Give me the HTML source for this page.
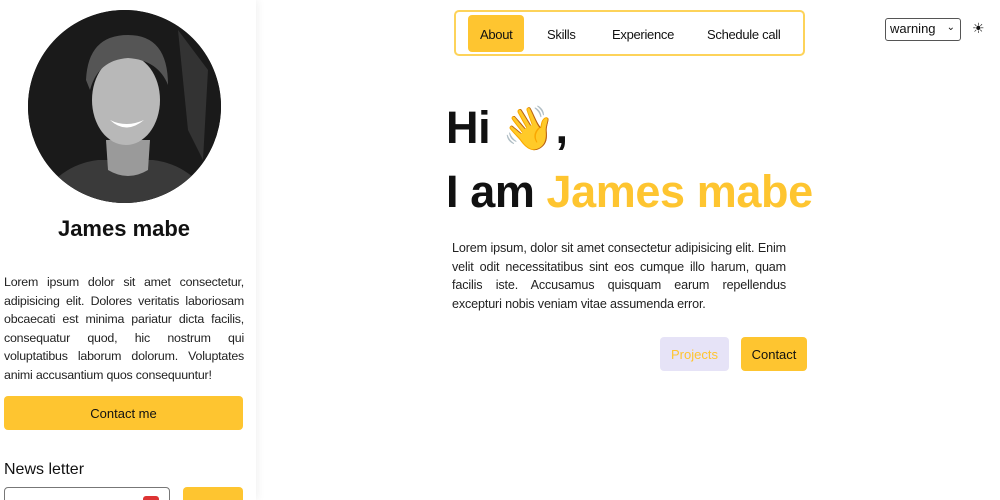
<!DOCTYPE html>
<html><head><style>
*{margin:0;padding:0;box-sizing:border-box}
html,body{width:1000px;height:500px;overflow:hidden}
body{background:#fff;font-family:"Liberation Sans",sans-serif;color:#111;position:relative}
.side{position:absolute;left:0;top:0;width:256px;height:500px;background:#fff;box-shadow:2px 0 8px rgba(0,0,0,.06);overflow:hidden}
.photo{position:absolute;left:28px;top:10px;width:193px;height:193px;border-radius:50%;background:#111;overflow:hidden}
.name{position:absolute;left:0;width:248px;top:216px;text-align:center;font-size:22px;font-weight:bold}
.bio{position:absolute;left:4px;top:273px;width:240px;font-size:12.4px;letter-spacing:-0.2px;line-height:18.5px;text-align:justify;color:#222}
.btn{position:absolute;background:#fec530;border-radius:4px;font-size:13px;display:flex;align-items:center;justify-content:center}
.nav{position:absolute;left:454px;top:10px;width:351px;height:46px;border:2px solid #fdd35a;border-radius:5px}
.nav span{position:absolute;top:15px;font-size:13px;letter-spacing:-0.3px}
h1{position:absolute;left:446px;font-size:45px;font-weight:bold;line-height:1;letter-spacing:-0.4px}
.p{position:absolute;left:452px;top:239px;width:334px;font-size:12.6px;letter-spacing:-0.15px;line-height:18.5px;text-align:justify;color:#222}
</style></head><body>
<div class="side">
 <div class="photo"><svg width="193" height="193" viewBox="0 0 193 193">
  <rect width="193" height="193" fill="#1a1a1a"/>
  <path d="M150 20 L180 60 L175 150 L160 120Z" fill="#333"/>
  <path d="M10 193 Q30 155 70 150 L125 150 Q165 155 185 193Z" fill="#3a3a3a"/>
  <path d="M78 130 L122 130 L120 160 Q100 172 80 160Z" fill="#9a9a9a"/>
  <ellipse cx="98" cy="90" rx="34" ry="45" fill="#b8b8b8"/>
  <path d="M58 70 Q60 25 100 25 Q140 25 140 75 Q130 50 100 48 Q70 50 62 80Z" fill="#555"/>
  <path d="M82 110 Q98 125 116 110 Q98 118 82 110Z" fill="#fff"/>
 </svg></div>
 <div class="name">James mabe</div>
 <div class="bio">Lorem ipsum dolor sit amet consectetur, adipisicing elit. Dolores veritatis laboriosam obcaecati est minima pariatur dicta facilis, consequatur quod, hic nostrum qui voluptatibus laborum dolorum. Voluptates animi accusantium quos consequuntur!</div>
 <div class="btn" style="left:4px;top:396px;width:239px;height:34px">Contact me</div>
 <div style="position:absolute;left:4px;top:461px;font-size:16px">News letter</div>
 <div style="position:absolute;left:4px;top:487px;width:166px;height:20px;border:1.5px solid #777;border-radius:4px"><div style="position:absolute;right:10px;top:8px;width:16px;height:10px;background:#d33;border-radius:3px"></div></div>
 <div class="btn" style="left:183px;top:487px;width:60px;height:20px"></div>
</div>
<div class="nav">
 <div style="position:absolute;left:12px;top:3px;width:56px;height:37px;background:#fec530;border-radius:4px"></div>
 <span style="left:24px">About</span><span style="left:91px">Skills</span><span style="left:156px">Experience</span><span style="left:251px">Schedule call</span>
</div>
<div style="position:absolute;left:885px;top:18px;width:76px;height:23px;border:1.5px solid #555;border-radius:3px;font-size:13px;padding:2px 4px">warning<span style="position:absolute;right:5px;top:3px;font-size:10px">⌄</span></div>
<div style="position:absolute;left:972px;top:20px;font-size:14px">☀</div>
<h1 style="top:105px">Hi <span style="font-size:43px">👋</span>,</h1>
<h1 style="top:169px">I am <span style="color:#fec530">James mabe</span></h1>
<div class="p">Lorem ipsum, dolor sit amet consectetur adipisicing elit. Enim velit odit necessitatibus sint eos cumque illo harum, quam facilis iste. Accusamus quisquam earum repellendus excepturi nobis veniam vitae assumenda error.</div>
<div class="btn" style="left:660px;top:337px;width:69px;height:34px;background:#e6e3f7;color:#fec530">Projects</div>
<div class="btn" style="left:741px;top:337px;width:66px;height:34px">Contact</div>
</body></html>
